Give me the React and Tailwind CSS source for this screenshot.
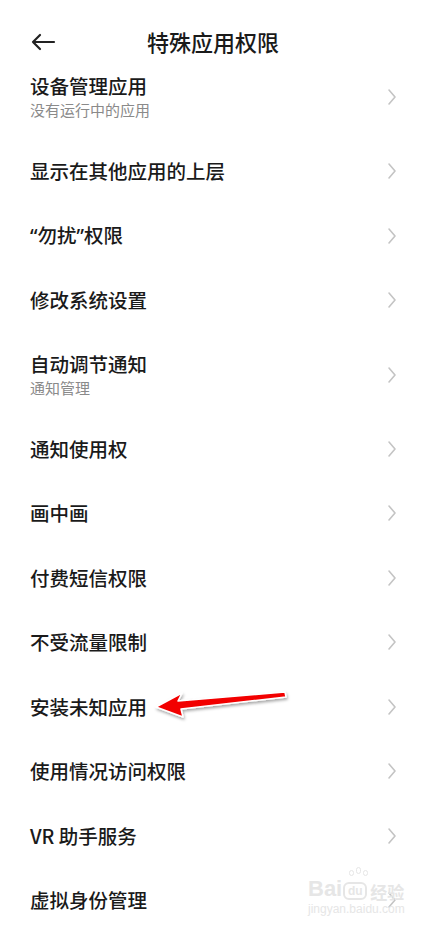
import React from "react";

const Q = ({ children }) => (
  <span style={{ fontFamily: '"Noto Sans", sans-serif' }}>{children}</span>
);

const rows = [
  { t: "设备管理应用", s: "没有运行中的应用" },
  { t: "显示在其他应用的上层" },
  { t: <><Q>“</Q>勿扰<Q>”</Q>权限</> },
  { t: "修改系统设置" },
  { t: "自动调节通知", s: "通知管理" },
  { t: "通知使用权" },
  { t: "画中画" },
  { t: "付费短信权限" },
  { t: "不受流量限制" },
  { t: "安装未知应用" },
  { t: "使用情况访问权限" },
  { t: "VR 助手服务" },
  { t: "虚拟身份管理" },
];

function Chevron() {
  return (
    <svg width="10" height="18" viewBox="0 0 10 18" fill="none">
      <path d="M2 2 L8 9 L2 16" stroke="#c4c4c4" strokeWidth="1.6" strokeLinecap="round" strokeLinejoin="round" />
    </svg>
  );
}

export default function App() {
  return (
    <div
      className="relative w-[426px] h-[932px] overflow-hidden bg-white text-[#1a1a1a]"
      style={{ fontFamily: '"Noto Sans CJK SC", "Noto Sans", sans-serif' }}
    >
      <div className="relative h-[55px]">
        <svg width="26" height="18" viewBox="0 0 26 18" fill="none" className="absolute left-[30px] top-[33px]">
          <path d="M24 9 H3 M10 2 L3 9 L10 16" stroke="#222" strokeWidth="2.2" strokeLinecap="round" strokeLinejoin="round" />
        </svg>
        <div className="absolute left-0 right-0 top-[25px] text-center text-[22px] font-medium leading-[32px]">
          特殊应用权限
        </div>
      </div>
      <div className="flex flex-col">
        {rows.map((r, i) => (
          <div
            key={i}
            className={`flex items-center justify-between pl-[30px] pr-[29px] ${r.s ? "h-[84px]" : "h-[64.5px]"}`}
          >
            <div className="flex flex-col">
              <div className="text-[19.5px] font-medium leading-[26px]">{r.t}</div>
              {r.s && <div className="text-[15px] leading-[22px] text-[#8a8a8a]">{r.s}</div>}
            </div>
            <Chevron />
          </div>
        ))}
      </div>

      <svg className="absolute left-0 top-0 pointer-events-none" width="426" height="932">
        <defs>
          <filter id="sh" x="-20%" y="-50%" width="140%" height="200%">
            <feDropShadow dx="1" dy="2" stdDeviation="1.5" floodColor="#000" floodOpacity="0.35" />
          </filter>
        </defs>
        <polygon
          points="156,707 182,693 178,701 285,692 286,697 181,709 183,717"
          fill="#f20000"
          stroke="#fff"
          strokeWidth="1.5"
          strokeLinejoin="round"
          filter="url(#sh)"
        />
      </svg>

      <div className="absolute left-[308px] top-[878px] flex flex-col items-start text-[#e6e6e6] pointer-events-none">
        <div className="flex items-end leading-none">
          <span className="text-[22px] font-bold" style={{ fontFamily: '"Liberation Sans", sans-serif' }}>Bai</span>
          <span className="relative mx-[1px] flex items-center justify-center w-[24px] h-[18px] rounded-[6px] border-2 border-[#e6e6e6] text-[12px] font-bold" style={{ fontFamily: '"Liberation Sans", sans-serif' }}>
            du
            <span className="absolute -top-[14px] left-[4px] flex gap-[2px]">
              <span className="w-[5px] h-[6px] rounded-full border border-[#e6e6e6]" />
              <span className="w-[5px] h-[7px] rounded-full border border-[#e6e6e6] -mt-[3px]" />
              <span className="w-[5px] h-[6px] rounded-full border border-[#e6e6e6]" />
            </span>
          </span>
          <span className="text-[17px] font-bold ml-[2px]">经验</span>
        </div>
        <div className="text-[12px] mt-[3px] leading-none" style={{ fontFamily: '"Liberation Sans", sans-serif' }}>jingyan.baidu.com</div>
      </div>
    </div>
  );
}
